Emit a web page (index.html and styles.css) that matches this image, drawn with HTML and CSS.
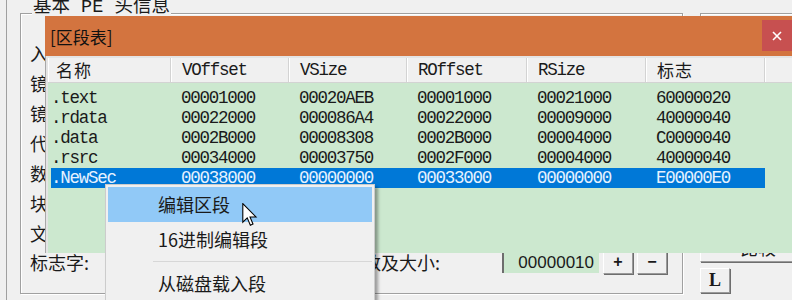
FILE: index.html
```html
<!DOCTYPE html>
<html lang="zh-CN">
<head>
<meta charset="utf-8">
<title>区段表</title>
<link rel="stylesheet" href="styles.css">
</head>
<body>
<div class="app">
  <div class="group">
    <span class="group-title">基本 PE 头信息</span>
    <div class="labels">
      <div class="lbl">入口点:</div>
      <div class="lbl">镜像基址:</div>
      <div class="lbl">镜像大小:</div>
      <div class="lbl">代码基址:</div>
      <div class="lbl">数据基址:</div>
      <div class="lbl">块对齐:</div>
      <div class="lbl">文件块对齐:</div>
      <div class="row-last">
        <span class="key">标志字:</span>
        <span class="valbox hidden-val">010B</span>
        <span class="rkey">RVA数及大小:</span>
        <span class="valbox">00000010</span>
        <span class="sbtn raised">+</span>
        <span class="sbtn raised">−</span>
      </div>
    </div>
  </div>
  <div class="side">
    <div class="side-box"></div>
    <div class="side-btn raised">比较</div>
    <div class="lbtn raised">L</div>
  </div>
</div>

<div class="dialog">
  <div class="titlebar">
    <span class="title">[区段表]</span>
    <span class="close"><svg width="10" height="10" viewBox="0 0 10 10"><path d="M1 1L9 9M9 1L1 9" stroke="#fff" stroke-width="1.6"/></svg></span>
  </div>
  <div class="body">
    <div class="list">
      <div class="lv-head">
        <span class="hc cjk first">名称</span>
        <span class="hc">VOffset</span>
        <span class="hc">VSize</span>
        <span class="hc">ROffset</span>
        <span class="hc">RSize</span>
        <span class="hc cjk">标志</span>
        <span class="hc blank"></span>
      </div>
      <div class="lv-rows">
        <div class="lv-row"><span>.text</span><span>00001000</span><span>00020AEB</span><span>00001000</span><span>00021000</span><span>60000020</span></div>
        <div class="lv-row"><span>.rdata</span><span>00022000</span><span>000086A4</span><span>00022000</span><span>00009000</span><span>40000040</span></div>
        <div class="lv-row"><span>.data</span><span>0002B000</span><span>00008308</span><span>0002B000</span><span>00004000</span><span>C0000040</span></div>
        <div class="lv-row"><span>.rsrc</span><span>00034000</span><span>00003750</span><span>0002F000</span><span>00004000</span><span>40000040</span></div>
        <div class="lv-row sel"><span>.NewSec</span><span>00038000</span><span>00000000</span><span>00033000</span><span>00000000</span><span>E00000E0</span></div>
      </div>
    </div>
  </div>
</div>

<div class="menu">
  <div class="menu-item hl">编辑区段</div>
  <div class="menu-item">16进制编辑段</div>
  <div class="menu-sep"></div>
  <div class="menu-item">从磁盘载入段</div>
</div>

<svg class="cursor" width="16" height="24" viewBox="0 0 13 20">
  <path d="M0.5 0.5 L0.5 16 L4.2 12.4 L6.8 18.5 L9 17.5 L6.5 11.6 L11.5 11.6 Z" fill="#fff" stroke="#000" stroke-width="0.9" stroke-linejoin="miter"/>
</svg>
</body>
</html>
```

FILE: styles.css
```css
html, body {
  margin: 0;
  padding: 0;
}
body {
  width: 792px;
  height: 300px;
  overflow: hidden;
  position: relative;
  background: #f0f0f0;
  font-family: "Noto Sans CJK SC", "Liberation Sans", sans-serif;
  color: #1a1a1a;
}

/* background window */
.app {
  display: flex;
  height: 300px;
  box-sizing: border-box;
  margin-left: 6px;
  border-left: 1px solid #a0a0a0;
  padding: 13px 0 0 13px;
}
.group {
  position: relative;
  flex: none;
  width: 663px;
  height: 281px;
  box-sizing: border-box;
  border: 1px solid #a0a0a0;
  box-shadow: inset 1px 1px 0 #fff, 1px 1px 0 #fff;
  padding: 24px 0 0 9px;
}
.group-title {
  position: absolute;
  top: -17px;
  left: 11px;
  padding: 0 1px;
  background: #f0f0f0;
  font-family: "Liberation Mono", "Noto Sans CJK SC", monospace;
  font-size: 18.5px;
  line-height: 22px;
  white-space: nowrap;
}
.labels {
  display: flex;
  flex-direction: column;
}
.lbl {
  height: 30px;
  line-height: 30px;
  font-size: 18px;
  white-space: nowrap;
}
.row-last {
  display: flex;
  align-items: center;
  height: 28px;
  font-size: 18px;
}
.key {
  width: 100px;
  white-space: nowrap;
}
.rkey {
  width: 210px;
  text-align: right;
  white-space: nowrap;
}
.valbox {
  width: 97px;
  height: 21px;
  box-sizing: border-box;
  background: #cce8cf;
  border-left: 2px solid #6d6d6d;
  border-top: 1px solid #8a8a8a;
  padding-right: 5px;
  text-align: right;
  font-family: "Liberation Sans", sans-serif;
  font-size: 17px;
  line-height: 20px;
  margin-left: 62px;
}
.hidden-val {
  margin-left: 0;
  width: 100px;
}
.raised {
  background: #f0f0f0;
  border: 1px solid;
  border-color: #fff #9a9a9a #9a9a9a #fff;
  box-shadow: 1px 1px 0 #6e6e6e;
  box-sizing: border-box;
  display: flex;
  align-items: center;
  justify-content: center;
}
.sbtn {
  width: 30px;
  height: 23px;
  margin-left: 4px;
  font-family: "Liberation Sans", sans-serif;
  font-size: 16px;
  font-weight: bold;
}
.side {
  flex: none;
  display: flex;
  flex-direction: column;
  margin-left: 17px;
  width: 116px;
}
.side-box {
  height: 218px;
  border-top: 1px solid #a0a0a0;
  border-left: 1px solid #a0a0a0;
  box-shadow: inset 1px 1px 0 #fff;
  box-sizing: border-box;
}
.side-btn {
  height: 31px;
  font-size: 18px;
}
.lbtn {
  margin-top: 6px;
  width: 30px;
  height: 25px;
  font-family: "Liberation Serif", serif;
  font-size: 18px;
  font-weight: bold;
}

/* dialog */
.dialog {
  position: absolute;
  left: 45px;
  top: 16px;
  width: 760px;
  height: 237px;
  display: flex;
  flex-direction: column;
}
.titlebar {
  flex: none;
  height: 40px;
  background: #d3743f;
  display: flex;
  align-items: flex-start;
}
.title {
  padding-left: 5px;
  line-height: 42px;
  font-size: 17px;
  color: #111;
}
.close {
  margin-left: auto;
  margin-top: 4px;
  margin-right: 13px;
  width: 30px;
  height: 31px;
  background: #c75050;
  display: flex;
  align-items: center;
  justify-content: center;
}
.body {
  flex: 1;
  display: flex;
  flex-direction: column;
  background: #e4e4e4;
  border-left: 1px solid #a8a8a8;
  padding: 2px 0 0 2px;
}
.list {
  flex: 1;
  display: flex;
  flex-direction: column;
  background: #cce8cf;
}
.lv-head {
  flex: none;
  display: grid;
  grid-template-columns: 123px 118px 118px 120px 119px 119px 1fr;
  height: 25px;
  background: #f0f0f0;
}
.hc {
  border-right: 1px solid #d3d3d3;
  border-bottom: 1px solid #d3d3d3;
  box-shadow: inset 1px 0 0 #fff;
  padding-left: 11px;
  line-height: 24px;
  font-family: "Liberation Mono", monospace;
  font-size: 17.5px;
  letter-spacing: -1.25px;
  white-space: nowrap;
}
.hc.cjk {
  font-family: "Noto Sans CJK SC", sans-serif;
  font-size: 17px;
  letter-spacing: 1px;
}
.hc.first {
  padding-left: 8px;
}
.hc.blank {
  border-right: none;
}
.lv-rows {
  padding: 5px 0 0 3px;
}
.lv-row {
  display: grid;
  grid-template-columns: 120px 118px 118px 120px 119px 119px;
  width: 714px;
  height: 20px;
  align-items: center;
  font-family: "Liberation Mono", monospace;
  font-size: 17.5px;
  line-height: 20px;
  letter-spacing: -1.25px;
  color: #1a1a1a;
  white-space: nowrap;
}
.lv-row > span {
  padding-left: 10px;
}
.lv-row > span:first-child {
  padding-left: 0;
}
.lv-row.sel {
  background: #0078d7;
  color: #e6f2ff;
}

/* context menu */
.menu {
  position: absolute;
  left: 105px;
  top: 184px;
  width: 270px;
  box-sizing: border-box;
  background: #f0f0f0;
  border: 1px solid #cccccc;
  padding: 2px;
  box-shadow: 3px 3px 3px rgba(0, 0, 0, 0.35);
}
.menu-item {
  height: 35px;
  line-height: 35px;
  padding-left: 50px;
  font-size: 18px;
  color: #1a1a1a;
  white-space: nowrap;
}
.menu-item.hl {
  background: #91c9f7;
}
.menu-sep {
  height: 1px;
  background: #d7d7d7;
  margin: 4px 0 4px 45px;
}
.cursor {
  position: absolute;
  left: 242px;
  top: 203px;
}
```
